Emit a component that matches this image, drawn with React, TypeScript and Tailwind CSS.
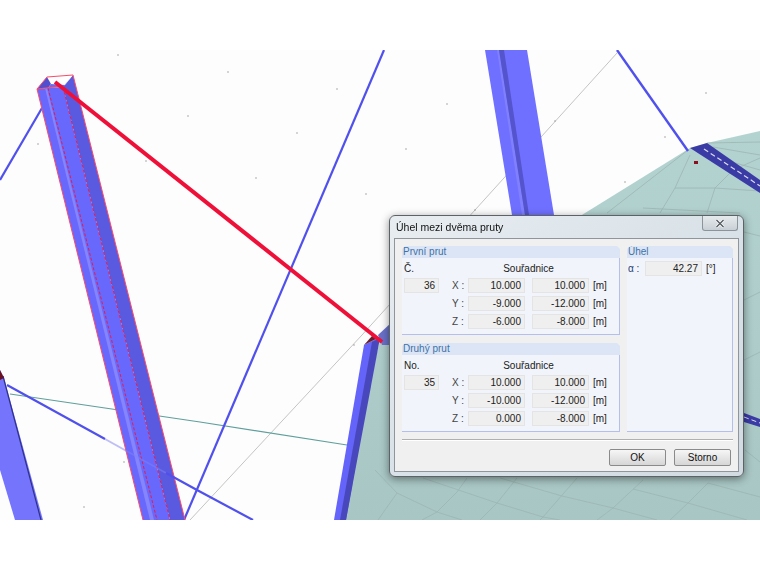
const dots = [
  [118, 55], [188, 116], [146, 161], [38, 144], [228, 72], [337, 89], [297, 133], [256, 178], [366, 194],
  [447, 104], [406, 149], [555, 121], [475, 210], [706, 93], [665, 137], [625, 182], [124, 462], [84, 507], [354, 345],
];

const mesh = [
  "M688 150L607 213", "M690 155L675 188L660 213", "M675 188L715 188L760 191", "M715 188L733 170L760 158",
  "M715 188L707 213", "M643 208L740 213", "M707 143L760 142", "M713 147L760 155", "M725 160L760 170",
  "M397 493L437 512L462 520", "M423 478L497 503L543 517L560 520", "M500 478L562 496L613 508L657 520",
  "M633 489L688 503L747 520", "M708 483L760 497", "M467 478L457 492L437 512L422 520", "M517 478L497 503L480 520",
  "M577 478L543 517L540 520", "M643 480L613 508L597 520", "M708 483L688 503L670 520", "M397 493L385 510L378 520",
  "M397 493L375 470", "M744 232L760 236", "M744 300L760 292", "M744 360L760 352", "M745 450L760 462",
];

function Scene() {
  return (
    <svg width="760" height="470" viewBox="0 50 760 470" className="block blur-[0.4px]">
      <defs>
        <linearGradient id="plate" x1="0" y1="0" x2="0" y2="1">
          <stop offset="0" stopColor="#b3d3d1" />
          <stop offset="1" stopColor="#a8c6c4" />
        </linearGradient>
      </defs>
      <rect x="0" y="50" width="760" height="470" fill="#fdfdfd" />

      {/* plate */}
      <polygon points="690,148 707,143 760,131 760,520 336,520 380,340" fill="url(#plate)" />
      <g fill="none" stroke="#9db5b3" strokeWidth="0.8">
        {mesh.map((d) => (
          <path key={d} d={d} />
        ))}
      </g>

      {/* thin lines */}
      <path d="M617 53L362 335L190 520" stroke="#c4c4c4" strokeWidth="1" fill="none" />
      <path d="M10 394L200 422L347 445" stroke="#5f9f9c" strokeWidth="1.2" fill="none" />
      <path d="M384 50L184 520" stroke="#5050ec" strokeWidth="2.2" fill="none" />
      <path d="M0 180L42 108" stroke="#5050ec" strokeWidth="2.2" fill="none" />
      <path d="M617 50L688 151" stroke="#5050ec" strokeWidth="2.4" fill="none" />
      <path d="M197 490L253 520" stroke="#5050ec" strokeWidth="2.2" fill="none" />

      {dots.map(([x, y]) => (
        <rect key={`${x}-${y}`} x={x - 0.6} y={y - 0.6} width="1.2" height="1.2" fill="#8a8a8a" />
      ))}
      <rect x="694" y="161" width="4" height="3" fill="#8b1020" />

      {/* beam behind the dialog */}
      <polygon points="485,50 527,50 554,215 512,215" fill="#6f70ff" />
      <polygon points="497,50 499,50 525,215 522,215" fill="#8080ff" />
      <polygon points="499,50 504,50 529,215 525,215" fill="#5454cc" />

      {/* plate edge beam */}
      <polygon points="690,148 707,143 760,180 760,193" fill="#3b3ba6" />
      <path d="M704 149L760 186" stroke="#dcdcf0" strokeWidth="1.2" strokeDasharray="5 3" fill="none" />
      <polygon points="744,413 760,419 760,427 744,422" fill="#3b3ba6" />
      <path d="M744 417L760 423" stroke="#dcdcf0" strokeWidth="1" strokeDasharray="5 3" fill="none" />

      {/* short beam at the line end */}
      <polygon points="364,345 378,338 346,520 334,520" fill="#6464fa" />
      <polygon points="372,342 380,338 346,520 340,520" fill="#4848bc" />
      <polygon points="364,345 372,336 378,338" fill="#6b2030" />
      <polygon points="378,335 392,322 392,345 382,345" fill="#6a70c8" />

      {/* lower left beam */}
      <polygon points="0,370 4,378 43,520 15,520 0,470" fill="#7474fc" />
      <path d="M3 376L41 520" stroke="#30308a" strokeWidth="1.2" fill="none" />
      <polygon points="0,370 4,378 0,380" fill="#6b1020" />

      {/* main beam */}
      <polygon points="37,89 63,87 170,520 143,520" fill="#6868fc" />
      <polygon points="63,87 73,75 185,520 170,520" fill="#5a5ae0" />
      <polygon points="45,88 47,88 154,520 150,520" fill="#8585ff" />
      <polygon points="47,77 73,75 65,85 51,84" fill="#ffffff" />
      <polygon points="37,89 47,77 51,84 48,88" fill="#4f4fd0" />
      <polygon points="51,84 65,85 63,87 48,88" fill="#6a6af0" />
      <polygon points="73,75 65,85 63,87" fill="#5a5ade" />
      <path d="M37 89L143 520M73 75L185 520M37 89L47 77L73 75M37 89L63 86" stroke="#ff4a66" strokeWidth="1" fill="none" />
      <path d="M48 88L157 520M63 87L170 520" stroke="#f01848" strokeWidth="1" strokeDasharray="3 2" fill="none" />
      <path d="M105 439L166 473" stroke="#8080f4" strokeOpacity="0.5" strokeWidth="2" fill="none" />
      <path d="M7 385L105 439M166 473L197 490" stroke="#5050ec" strokeWidth="2.2" fill="none" />

      {/* measured line */}
      <path d="M55 82L382 342" stroke="#ee1038" strokeWidth="4" fill="none" />
    </svg>
  );
}

function Field({ value, className = "w-full" }: { value: string; className?: string }) {
  return (
    <div className={`h-[15px] leading-[14px] bg-[#efefef] border border-[#f7f7f7] outline outline-[#e4e4e4] -outline-offset-1 text-right pr-[3px] text-[#222] ${className}`}>
      {value}
    </div>
  );
}

function Group({ title, className, children }: { title: string; className: string; children?: React.ReactNode }) {
  return (
    <div className={`flex flex-col ${className}`}>
      <div className="h-3 leading-[12px] pl-[1px] bg-[#dbe5f5] text-[#3f72a8] [clip-path:polygon(3px_0,calc(100%-3px)_0,100%_3px,100%_100%,0_100%,0_3px)]">
        {title}
      </div>
      <div className="flex-1 bg-[#f1f4fa] border-r border-b border-[#b4bfee]">{children}</div>
    </div>
  );
}

function MemberGroup({ title, no, noLabel, rows }: { title: string; no: string; noLabel: string; rows: string[][] }) {
  return (
    <Group title={title} className="h-[89px]">
      <div className="grid grid-cols-[35px_29px_57px_7px_57px_auto] grid-rows-[13px_15px_15px_15px] gap-y-[3px] pl-[2px] pt-[4px] text-[#222]">
        <div className="leading-[13px]">{noLabel}</div>
        <div />
        <div className="col-span-3 text-center leading-[13px]">Souřadnice</div>
        <div />
        {rows.map((r, i) => (
          <div key={r[0]} className="contents">
            {i === 0 ? <Field value={no} /> : <div />}
            <div className="pl-[13px] leading-[15px] text-[#444]">{r[0]} :</div>
            <Field value={r[1]} />
            <div />
            <Field value={r[2]} />
            <div className="pl-1 leading-[15px]">[m]</div>
          </div>
        ))}
      </div>
    </Group>
  );
}

function Dialog() {
  return (
    <div className="absolute left-[389px] top-[165px] w-[355px] h-[262px] flex flex-col rounded-md border border-[#5c6266] bg-gradient-to-br from-[#e8edf1] via-[#d9e2e8] to-[#d2dbe2] shadow-[0_2px_8px_rgba(0,0,0,0.45)] px-[4px] pb-[4px] blur-[0.3px]">
      <div className="h-[22px] shrink-0 flex justify-between">
        <span className="pl-[2px] pt-[5px] text-[10.5px] leading-[13px] text-[#111]">Úhel mezi dvěma pruty</span>
        <div className="w-[36px] h-[15px] mr-[1px] flex items-center justify-center rounded-b-[3px] border border-t-0 border-[#8d9499] bg-gradient-to-b from-[#e6eaed] to-[#c9d0d5]">
          <svg width="10" height="9" viewBox="0 0 10 9">
            <path d="M1.5 1L8.5 8M8.5 1L1.5 8" stroke="#fff" strokeWidth="3" />
            <path d="M1.5 1L8.5 8M8.5 1L1.5 8" stroke="#5a6066" strokeWidth="1.5" />
          </svg>
        </div>
      </div>
      <div className="flex-1 border border-[#8f969b] bg-[#f0f0f0] pl-[7px] pr-[4px] pt-[7px]">
        <div className="flex gap-[7px] w-[331px]">
          <div className="w-[218px] flex flex-col gap-[8px]">
            <MemberGroup
              title="První prut"
              noLabel="Č."
              no="36"
              rows={[["X", "10.000", "10.000"], ["Y", "-9.000", "-12.000"], ["Z", "-6.000", "-8.000"]]}
            />
            <MemberGroup
              title="Druhý prut"
              noLabel="No."
              no="35"
              rows={[["X", "10.000", "10.000"], ["Y", "-10.000", "-12.000"], ["Z", "0.000", "-8.000"]]}
            />
          </div>
          <Group title="Úhel" className="w-[106px] h-[186px]">
            <div className="flex pt-[3px] pl-[1px] text-[#222]">
              <span className="w-[17px] leading-[15px] text-[#1d3f78]">α :</span>
              <Field value="42.27" className="w-[57px]" />
              <span className="pl-1 leading-[15px]">[°]</span>
            </div>
          </Group>
        </div>
        <div className="mt-[7px] mr-[1px] border-t border-b border-t-[#b0b0b0] border-b-white h-[2px]" />
        <div className="mt-[8px] mr-[3px] flex justify-end gap-[8px]">
          <button className="w-[57px] h-[17px] rounded-[2px] border border-[#8a8a8a] bg-gradient-to-b from-[#f6f6f6] to-[#d6d6d6] leading-[14px] text-[#111]">OK</button>
          <button className="w-[57px] h-[17px] rounded-[2px] border border-[#8a8a8a] bg-gradient-to-b from-[#f6f6f6] to-[#d6d6d6] leading-[14px] text-[#111]">Storno</button>
        </div>
      </div>
    </div>
  );
}

export default function App() {
  return (
    <div className="w-[760px] h-[570px] bg-white overflow-hidden flex flex-col pt-[50px] font-['Liberation_Sans',sans-serif] text-[10px]">
      <div className="relative w-[760px] h-[470px]">
        <Scene />
        <Dialog />
      </div>
    </div>
  );
}
